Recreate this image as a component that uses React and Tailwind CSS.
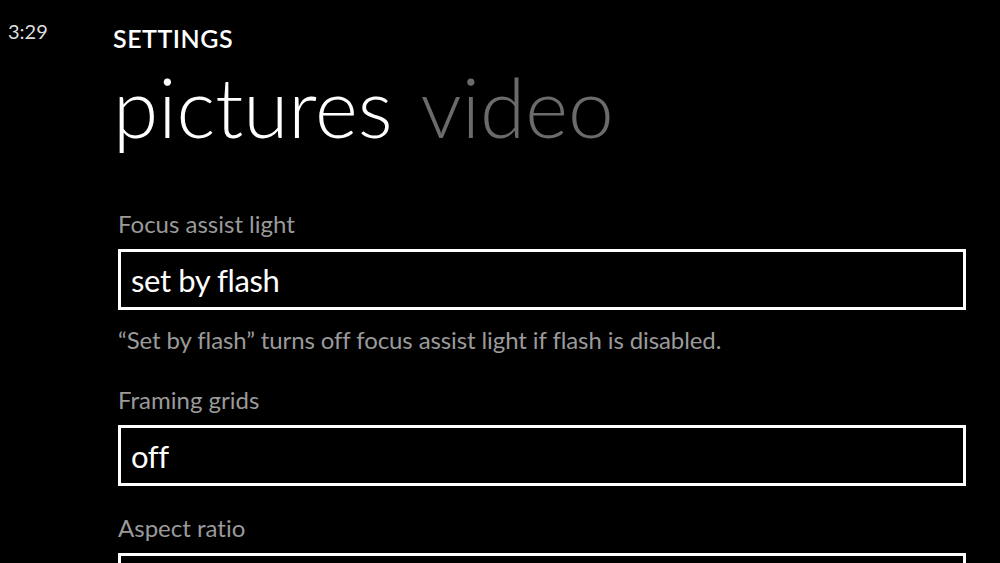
const FONT = "font-['Lato','Open_Sans',sans-serif] [font-variant-ligatures:none]"

const SECTIONS = [
  { label: 'Focus assist light', value: 'set by flash', hint: '“Set by flash” turns off focus assist light if flash is disabled.' },
  { label: 'Framing grids', value: 'off' },
  { label: 'Aspect ratio', value: '' },
]

function Picker({ label, value, hint, first, afterHint }) {
  return (
    <div className={first ? 'mt-[54px]' : afterHint ? 'mt-[30px]' : 'mt-[27px]'}>
      <p className="text-[24px] leading-[30px] text-[#9a9a9a]">{label}</p>
      <div className="mt-[10px] h-[61px] border-[3px] border-white pl-[10px] pt-[8px]">
        <p className="text-[31px] leading-[40px] tracking-[-0.4px] text-white">{value}</p>
      </div>
      {hint && <p className="mt-[15px] text-[24px] leading-[30px] tracking-[-0.1px] text-[#9a9a9a]">{hint}</p>}
    </div>
  )
}

export default function App() {
  return (
    <div className={`h-[563px] w-full overflow-hidden bg-black flex ${FONT}`}>
      {/* status bar clock */}
      <div className="w-[113px] shrink-0 pl-2 pt-[18px]">
        <p className="text-[20px] leading-[26px] text-[#dcdcdc]">3:29</p>
      </div>

      <div className="flex-1 pr-[34px]">
        <p className="pt-[23px] text-[25px] leading-[30px] font-semibold text-white tracking-[0.5px]">SETTINGS</p>

        <div className="mt-[4px] flex gap-[28px] text-[82px] leading-[98px] font-light">
          <span className="text-white">pictures</span>
          <span className="text-[#6b6b6b]">video</span>
        </div>

        <div className="pl-[5px]">
          {SECTIONS.map((s, i) => (
            <Picker key={s.label} {...s} first={i === 0} afterHint={i > 0 && !!SECTIONS[i - 1].hint} />
          ))}
        </div>
      </div>
    </div>
  )
}
